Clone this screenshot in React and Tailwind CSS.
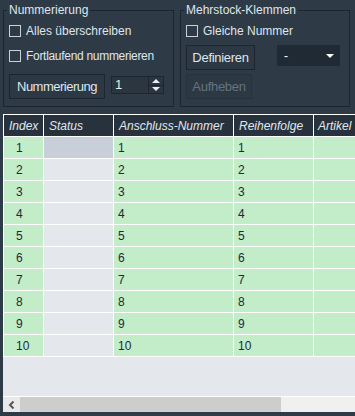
import React from "react";

const rows = [1, 2, 3, 4, 5, 6, 7, 8, 9, 10];

function Check() {
  return <span className="inline-block w-[12px] h-[12px] border border-[#c9d2db] shrink-0" />;
}

export default function App() {
  return (
    <div className="w-[355px] h-[416px] bg-[#2e3a45] flex flex-col font-['Liberation_Sans',Arial,sans-serif] text-[12px] overflow-hidden pb-[4px]">
      <div className="flex pl-[3px] pt-[3px] gap-[6px] text-[#dfe6ed]">
        <fieldset className="w-[171px] border border-[#1d262e] px-[5px] pb-[7px]">
          <legend className="px-[2px] -ml-[2px] leading-[14px]">Nummerierung</legend>
          <div className="h-[27px] flex items-center gap-[5px]">
            <Check />
            <span>Alles überschreiben</span>
          </div>
          <div className="h-[23px] flex items-center gap-[5px]">
            <Check />
            <span className="tracking-[-0.3px]">Fortlaufend nummerieren</span>
          </div>
          <div className="mt-[7px] flex items-start">
            <div className="h-[25px] w-[96px] border border-[#1d262e] bg-[#2c3843] flex items-center justify-center text-[13px] tracking-[-0.5px]">
              Nummerierung
            </div>
            <div className="ml-[6px] mt-[2px] h-[18px] w-[53px] border border-[#1d262e] bg-[#2b3641] flex items-center">
              <span className="pl-[3px] flex-1 text-[13px] text-[#e2f2e6]">1</span>
              <div className="w-[15px] h-full border-l border-[#1d262e] flex flex-col">
                <div className="flex-1 flex items-center justify-center border-b border-[#1d262e]">
                  <svg width="8" height="4" viewBox="0 0 8 4"><polygon points="0,4 4,0 8,4" fill="#e8eef3" /></svg>
                </div>
                <div className="flex-1 flex items-center justify-center">
                  <svg width="8" height="4" viewBox="0 0 8 4"><polygon points="0,0 8,0 4,4" fill="#e8eef3" /></svg>
                </div>
              </div>
            </div>
          </div>
        </fieldset>
        <fieldset className="w-[170px] border border-[#1d262e] px-[5px] pb-[7px]">
          <legend className="px-[2px] -ml-[2px] leading-[14px]">Mehrstock-Klemmen</legend>
          <div className="h-[27px] flex items-center gap-[5px]">
            <Check />
            <span>Gleiche Nummer</span>
          </div>
          <div className="mt-[1px] flex items-start">
            <div className="h-[25px] w-[69px] border border-[#1d262e] bg-[#2c3843] flex items-center justify-center text-[13px] tracking-[-0.3px]">
              Definieren
            </div>
            <div className="ml-[22px] h-[21px] w-[63px] bg-[#1f2a35] flex items-center justify-between pl-[7px] pr-[6px]">
              <span className="text-white">-</span>
              <svg width="8" height="4" viewBox="0 0 8 4"><polygon points="0,0 8,0 4,4" fill="#ffffff" /></svg>
            </div>
          </div>
          <div className="mt-[4px] h-[25px] w-[66px] border border-[#27323c] bg-[#2c3843] flex items-center justify-center text-[13px] tracking-[-0.3px] text-[#66737f]">
            Aufheben
          </div>
        </fieldset>
      </div>

      <div className="mt-[7px] ml-[3px] flex-1 flex flex-col bg-[#e4e7ec] text-[12px]">
        <div className="flex h-[22px] border-t border-white bg-[#27323c] italic text-[#e1e8ef]">
          <div className="w-[40px] border-l border-white pl-[5px] flex items-center">Index</div>
          <div className="w-[70px] border-l border-white pl-[5px] flex items-center">Status</div>
          <div className="w-[120px] border-l border-white pl-[5px] flex items-center">Anschluss-Nummer</div>
          <div className="w-[80px] border-l border-white pl-[5px] flex items-center">Reihenfolge</div>
          <div className="flex-1 border-l border-white pl-[4px] flex items-center">Artikel</div>
        </div>
        {rows.map((r) => (
          <div key={r} className="flex h-[22px] border-t border-white text-[#1b2a3c]">
            <div className="w-[40px] border-l border-white bg-[#c3ecc9] pl-[12px] flex items-center">{r}</div>
            <div className={"w-[70px] border-l border-white flex items-center " + (r === 1 ? "bg-[#c8cfd9]" : "bg-[#e4e7ec]")} />
            <div className="w-[120px] border-l border-white bg-[#c3ecc9] pl-[4px] flex items-center">{r}</div>
            <div className="w-[80px] border-l border-white bg-[#c3ecc9] pl-[4px] flex items-center">{r}</div>
            <div className="flex-1 border-l border-white bg-[#c3ecc9]" />
          </div>
        ))}
        <div className="h-px bg-white" />
        <div className="flex-1 bg-[#e4e7ec]" />
        <div className="h-px bg-white" />
        <div className="flex h-[15px]">
          <div className="w-[17px] bg-[#e9e9e9] flex items-center justify-center">
            <svg width="7" height="8" viewBox="0 0 7 8">
              <polyline points="5.5,0.5 2,4 5.5,7.5" fill="none" stroke="#555555" strokeWidth="2" />
            </svg>
          </div>
          <div className="w-[261px] bg-[#cdcdcd]" />
          <div className="flex-1 bg-[#f0f0f0]" />
        </div>
      </div>
    </div>
  );
}
